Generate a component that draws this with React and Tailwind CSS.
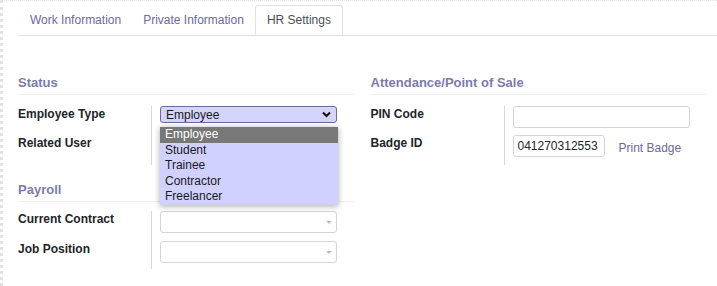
import React from 'react';

const font = { fontFamily: '"Liberation Sans", Arial, sans-serif' };

const Caret = () => (
    <span className="ml-auto mr-[4px] w-0 h-0 border-l-[3px] border-r-[3px] border-t-[3px] border-l-transparent border-r-transparent border-t-[#c0c0c0]" />
);

const Row = ({ label, children, h = 'h-[29px]' }) => (
    <div className={`flex ${h}`}>
        <div className="w-[134px] shrink-0 border-r border-[#d8d8d8] font-bold text-[12px] leading-[17px] text-[#212529]">
            {label}
        </div>
        <div className="pl-[8px] flex items-start gap-[14px]">{children}</div>
    </div>
);

const Heading = ({ children, className = '' }) => (
    <div className={`border-b border-[#eeeeee] pb-[3px] text-[13px] leading-[16px] font-bold text-[#7C7BAD] ${className}`}>
        {children}
    </div>
);

const options = ['Employee', 'Student', 'Trainee', 'Contractor', 'Freelancer'];

export default function App() {
    return (
        <div className="w-[717px] h-[286px] bg-white overflow-hidden border-t border-[#e4e4e4] border-l-[3px] border-l-[#e2e2e2] border-dotted relative" style={font}>
            {/* Tabs */}
            <div className="ml-[15px] mt-[4px] pl-[1px] flex border-b border-[#dee2e6] text-[12px]">
                <div className="px-[11px] h-[30px] flex items-center text-[#6b6aa3]">Work Information</div>
                <div className="px-[11px] h-[30px] flex items-center text-[#6b6aa3]">Private Information</div>
                <div className="px-[11px] h-[30px] flex items-center text-[#495057] border border-[#dee2e6] border-b-white rounded-t-[3px] -mb-px bg-white">
                    HR Settings
                </div>
            </div>

            {/* Content */}
            <div className="ml-[15px] flex gap-[16px] pr-[10px]">
                {/* Left column */}
                <div className="w-[337px]">
                    <Heading className="mt-[39px] mb-[11px]">Status</Heading>
                    <Row label="Employee Type">
                        <div className="relative">
                            <div className="w-[177px] h-[17px] bg-[#d4d4ff] border border-[#6c6b9c] rounded-[3px] flex items-center pl-[5px] text-[12px] text-[#1a1a1a]">
                                Employee
                                <svg className="ml-auto mr-[5px]" width="9" height="7" viewBox="0 0 9 7">
                                    <path d="M1 1.5 L4.5 5 L8 1.5" fill="none" stroke="#111" strokeWidth="2" />
                                </svg>
                            </div>
                            <div className="absolute left-0 top-[21px] w-[178px] bg-[#d1d1ff] shadow-[0_1px_6px_rgba(0,0,0,0.35)] z-10 text-[12px] text-[#1a1a1a]">
                                {options.map((o, i) => (
                                    <div
                                        key={o}
                                        className={`h-[15.6px] leading-[15.6px] pl-[5px] ${i === 0 ? 'bg-[#787878] text-white' : ''}`}
                                    >
                                        {o}
                                    </div>
                                ))}
                            </div>
                        </div>
                    </Row>
                    <Row label="Related User" h="h-[30px]">
                        <div className="w-[177px] h-[22px]" />
                    </Row>
                    <Heading className="mt-[17px] mb-[9px]">Payroll</Heading>
                    <Row label="Current Contract" h="h-[30px]">
                        <div className="w-[177px] h-[22px] border border-[#d4d4d4] rounded-[3px] flex items-center">
                            <Caret />
                        </div>
                    </Row>
                    <Row label="Job Position" h="h-[28px]">
                        <div className="w-[177px] h-[22px] border border-[#d4d4d4] rounded-[3px] flex items-center">
                            <Caret />
                        </div>
                    </Row>
                </div>

                {/* Right column */}
                <div className="w-[337px]">
                    <Heading className="mt-[39px] mb-[11px]">Attendance/Point of Sale</Heading>
                    <Row label="PIN Code">
                        <div className="w-[177px] h-[22px] border border-[#d4d4d4] rounded-[3px]" />
                    </Row>
                    <Row label="Badge ID" h="h-[30px]">
                        <div className="w-[92px] h-[22px] border border-[#d4d4d4] rounded-[3px] flex items-center pl-[4px] text-[12px] text-[#212529]">
                            041270312553
                        </div>
                        <span className="mt-[4px] text-[12px] text-[#6b6aa3]">Print Badge</span>
                    </Row>
                </div>
            </div>
        </div>
    );
}
